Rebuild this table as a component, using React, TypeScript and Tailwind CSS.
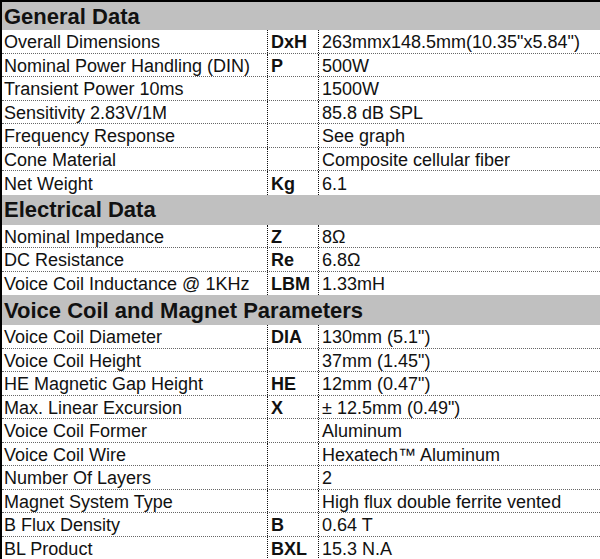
type Row = { label: string; sym?: string; value: string };
type Section = { title: string; first?: boolean; rows: Row[] };

const sections: Section[] = [
  {
    title: "General Data",
    first: true,
    rows: [
      { label: "Overall Dimensions", sym: "DxH", value: "263mmx148.5mm(10.35\"x5.84\")" },
      { label: "Nominal Power Handling (DIN)", sym: "P", value: "500W" },
      { label: "Transient Power 10ms", value: "1500W" },
      { label: "Sensitivity 2.83V/1M", value: "85.8 dB SPL" },
      { label: "Frequency Response", value: "See graph" },
      { label: "Cone Material", value: "Composite cellular fiber" },
      { label: "Net Weight", sym: "Kg", value: "6.1" },
    ],
  },
  {
    title: "Electrical Data",
    rows: [
      { label: "Nominal Impedance", sym: "Z", value: "8Ω" },
      { label: "DC Resistance", sym: "Re", value: "6.8Ω" },
      { label: "Voice Coil Inductance @ 1KHz", sym: "LBM", value: "1.33mH" },
    ],
  },
  {
    title: "Voice Coil and Magnet Parameters",
    rows: [
      { label: "Voice Coil Diameter", sym: "DIA", value: "130mm (5.1\")" },
      { label: "Voice Coil Height", value: "37mm (1.45\")" },
      { label: "HE Magnetic Gap Height", sym: "HE", value: "12mm (0.47\")" },
      { label: "Max. Linear Excursion", sym: "X", value: "± 12.5mm (0.49\")" },
      { label: "Voice Coil Former", value: "Aluminum" },
      { label: "Voice Coil Wire", value: "Hexatech™ Aluminum" },
      { label: "Number Of Layers", value: "2" },
      { label: "Magnet System Type", value: "High flux double ferrite vented" },
      { label: "B Flux Density", sym: "B", value: "0.64 T" },
      { label: "BL Product", sym: "BXL", value: "15.3 N.A" },
    ],
  },
];

export default function App() {
  return (
    <div
      className="w-[600px] h-[559px] overflow-hidden bg-white text-[#111] border-t-2 border-l-2 border-black"
      style={{ fontFamily: '"Liberation Sans", Arial, sans-serif' }}
    >
      {sections.map((s) => (
        <section key={s.title}>
          <div
            className={`${s.first ? "h-[28px]" : "h-[30px]"} bg-[#c0c0c0] flex items-center pl-[2px] pt-[1px] text-[22px] font-bold leading-none`}
          >
            {s.title}
          </div>
          {s.rows.map((r, i) => (
            <div
              key={r.label}
              className={`h-[23.5px] flex text-[18px] leading-none ${
                i < s.rows.length - 1 ? "border-b border-dotted border-[#666]" : ""
              }`}
            >
              <div className="w-[265px] flex items-center pl-[2px] pt-[2px] whitespace-nowrap">
                {r.label}
              </div>
              <div className="w-[51px] flex items-center pl-[3px] pt-[2px] font-bold border-l border-dotted border-[#111]">
                {r.sym ?? ""}
              </div>
              <div className="flex-1 flex items-center pl-[3px] pt-[2px] whitespace-nowrap border-l border-dotted border-[#111]">
                {r.value}
              </div>
            </div>
          ))}
        </section>
      ))}
    </div>
  );
}
